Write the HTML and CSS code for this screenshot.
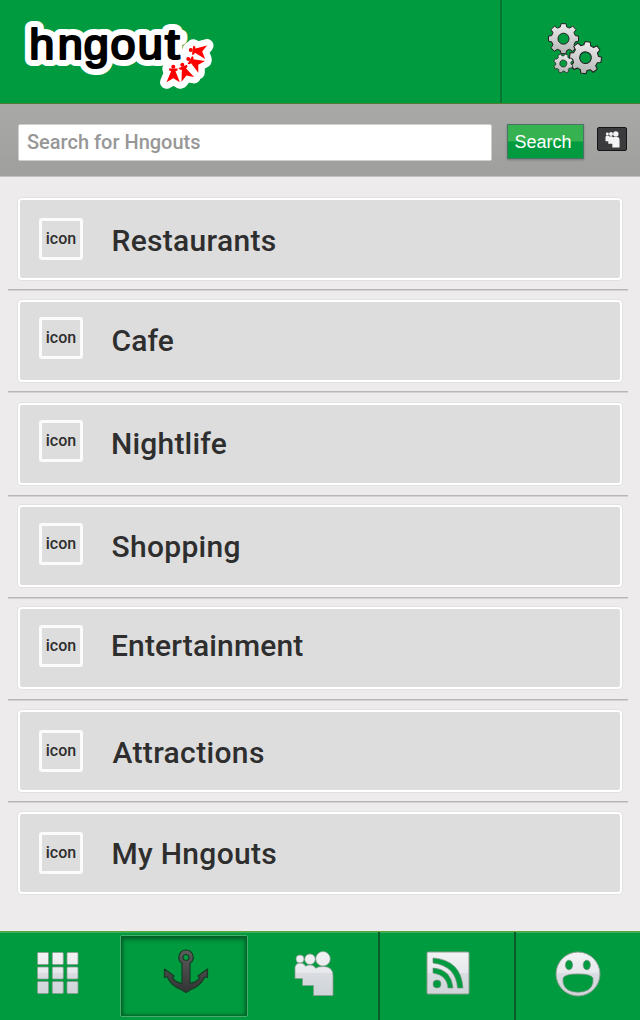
FILE: index.html
```html
<!DOCTYPE html>
<html lang="en">
<head>
<meta charset="utf-8">
<title>hngout</title>
<link rel="stylesheet" href="styles.css">
</head>
<body>
<div class="app">
  <header class="header">
    <div class="brand">
      <svg class="logo" viewBox="20 15 200 80" role="img" aria-label="hngout">
        <defs>
          <g id="figure">
            <circle r="2"/>
            <path d="M-4.500 1.800H4.500L4 3.800 2.200 4.500 6.600 15.500 0 11.500-6.800 15.500-2.200 4.500-4 3.800z"/>
          </g>
          <g id="crowd">
            <use href="#figure" transform="translate(173.300 66.800)"/>
            <use href="#figure" transform="translate(182.300 64.800) rotate(-21)"/>
            <use href="#figure" transform="translate(188.300 59) rotate(-60)"/>
            <use href="#figure" transform="translate(190.800 50) rotate(-82)"/>
          </g>
          <g id="wordmark">
            <text class="logo-text" transform="scale(1.060 1)" x="27.500 54.500 79 104.300 129.900" y="58.700">hngou</text>
            <text class="logo-text" x="165" y="58.700" textLength="14.500" lengthAdjust="spacingAndGlyphs">t</text>
          </g>
        </defs>
        <use class="logo-halo" href="#wordmark"/>
        <use class="crowd-halo" href="#crowd"/>
        <use class="logo-ink" href="#wordmark"/>
        <use class="crowd-ink" href="#crowd"/>
      </svg>
    </div>
    <button class="settings" aria-label="Settings">
      <svg viewBox="545 20 60 58" width="60" height="58">
        <defs>
          <linearGradient id="metal" x1="0" y1="0" x2="0" y2="1"><stop offset="0" stop-color="#ececec"/><stop offset="1" stop-color="#b5b5b5"/></linearGradient>
        </defs>
        <g fill="url(#metal)" stroke="#222" stroke-width="1" stroke-linejoin="round">
          <path id="gear" transform="translate(563.500 38.700)" fill-rule="evenodd" d="M-2.500-15h5l.7 3.200 3 1.200 3-2 3.300 3.500-2 3 1.300 3 3.200.6v5l-3.200.6-1.300 3 2 3-3.500 3.500-3-2-2.800 1.200-.7 3.200h-5l-.7-3.200-3-1.200-3 2-3.300-3.500 2-3-1.300-3-3.200-.6v-5l3.200-.6 1.300-3-2-3 3.500-3.500 3 2 2.800-1.200zM5.500 0a5.500 5.500 0 1 0-11 0a5.500 5.500 0 1 0 11 0z"/>
          <use href="#gear" transform="translate(585.500 57.700) rotate(8) scale(1.060) translate(-563.500 -38.700)"/>
          <use href="#gear" transform="translate(563.300 63.500) rotate(20) scale(.63) translate(-563.500 -38.700)"/>
        </g>
      </svg>
    </button>
  </header>

  <form class="search">
    <input class="search-input" type="text" placeholder="Search for Hngouts" aria-label="Search for Hngouts">
    <button class="search-button" type="button">Search</button>
    <button class="friends-button" type="button" aria-label="Friends">
      <svg viewBox="0 0 40 46" width="15" height="17"><use href="#people" fill="#f4f4f4"/></svg>
    </button>
  </form>

  <main class="list">
    <a class="card restaurants"><span class="thumb">icon</span><span class="label">Restaurants</span></a>
    <a class="card cafe"><span class="thumb">icon</span><span class="label">Cafe</span></a>
    <a class="card nightlife"><span class="thumb">icon</span><span class="label">Nightlife</span></a>
    <a class="card shopping"><span class="thumb">icon</span><span class="label">Shopping</span></a>
    <a class="card entertainment"><span class="thumb">icon</span><span class="label">Entertainment</span></a>
    <a class="card attractions"><span class="thumb">icon</span><span class="label">Attractions</span></a>
    <a class="card mine"><span class="thumb">icon</span><span class="label">My Hngouts</span></a>
  </main>

  <nav class="tabs">
    <a class="tab tab-grid" aria-label="Categories">
      <svg viewBox="0 0 44 44" width="44" height="44">
        <defs>
          <linearGradient id="silver" gradientUnits="userSpaceOnUse" x1="0" y1="0" x2="0" y2="44"><stop offset="0" stop-color="#f3f3f5"/><stop offset=".49" stop-color="#e6e8eb"/><stop offset=".51" stop-color="#d9dde1"/><stop offset="1" stop-color="#cfd4d8"/></linearGradient>
        </defs>
        <g fill="url(#silver)" stroke="#8b9c90" stroke-width=".8">
          <path d="M2.500 1.500h9q1 0 1 1v10q0 1-1 1h-9q-1 0-1-1v-10q0-1 1-1zM17.300 1.500h9q1 0 1 1v10q0 1-1 1h-9q-1 0-1-1v-10q0-1 1-1zM32 1.500h9q1 0 1 1v10q0 1-1 1h-9q-1 0-1-1v-10q0-1 1-1z"/>
          <path d="M2.500 16h9q1 0 1 1v10q0 1-1 1h-9q-1 0-1-1v-10q0-1 1-1zM17.300 16h9q1 0 1 1v10q0 1-1 1h-9q-1 0-1-1v-10q0-1 1-1zM32 16h9q1 0 1 1v10q0 1-1 1h-9q-1 0-1-1v-10q0-1 1-1z"/>
          <path d="M2.500 30.500h9q1 0 1 1v10q0 1-1 1h-9q-1 0-1-1v-10q0-1 1-1zM17.300 30.500h9q1 0 1 1v10q0 1-1 1h-9q-1 0-1-1v-10q0-1 1-1zM32 30.500h9q1 0 1 1v10q0 1-1 1h-9q-1 0-1-1v-10q0-1 1-1z"/>
        </g>
      </svg>
    </a>
    <a class="tab tab-anchor" aria-label="Hngouts">
      <svg viewBox="0 0 46 46" width="46" height="46">
        <defs><linearGradient id="iron" x1="0" y1="0" x2="0" y2="1"><stop offset="0" stop-color="#5d5d5d"/><stop offset="1" stop-color="#333"/></linearGradient></defs>
        <path fill="url(#iron)" stroke="#173d25" stroke-width="1.200" stroke-linejoin="round" fill-rule="evenodd" d="M23 1a7.300 7.300 0 0 1 4 13.300V34.500q6-1 9.800-5.500l-2-2L44.500 20v8.500l-2.500-.8Q37 37.500 28 40.500l-5 3-5-3Q9 37.500 4 27.700l-2.500.8V20l9.700 7-2 2q3.800 4.500 9.800 5.500V14.300A7.300 7.300 0 0 1 23 1zM23 5.500a3 3 0 1 0 0 6a3 3 0 1 0 0-6z"/>
      </svg>
    </a>
    <a class="tab tab-people" aria-label="Friends">
      <svg viewBox="0 0 40 46" width="40" height="46">
        <defs><g id="people"><circle cx="6" cy="8" r="4"/><circle cx="16" cy="8.200" r="5.300"/><circle cx="29" cy="7.800" r="7.300"/><path d="M1 16q1-4 5-4 4 0 5.500 3.200Q13.500 14 16 14q4 0 5.500 3.200Q24 15.500 29 15.500q10 0 10 9V44.500H19.500V34.500h-11v-7H1z"/></g></defs>
        <use href="#people" fill="url(#silver)" stroke="#8b9c90" stroke-width=".7"/>
      </svg>
    </a>
    <a class="tab tab-feed" aria-label="Feed">
      <svg viewBox="0 0 44 44" width="44" height="44">
        <rect x="1" y="1" width="42" height="42" rx="1" fill="url(#silver)" stroke="#8b9c90"/>
        <circle cx="11" cy="33" r="4" class="cut"/>
        <path class="cut" d="M7 17q18 1 20 20H22Q21 24 7 22zM7 7q28 2 30 30H31.500Q30 15 7 12z"/>
      </svg>
    </a>
    <a class="tab tab-smile" aria-label="Profile">
      <svg viewBox="0 0 46 46" width="46" height="46">
        <circle cx="23" cy="23" r="22" fill="url(#silver)" stroke="#8b9c90"/>
        <ellipse class="cut" cx="14" cy="14" rx="3.600" ry="4.800"/><ellipse class="cut" cx="31.800" cy="14" rx="3.600" ry="4.800"/>
        <path class="cut" d="M8 27q2-4 15-4t15 4q1 11-9 13.500-6 1.500-12 0Q7 38 8 27z"/>
      </svg>
    </a>
  </nav>
</div>
</body>
</html>
```
FILE: styles.css
```css
* { box-sizing: border-box; }

body {
  margin: 0;
  background: #edebec;
  font-family: Roboto, "Liberation Sans", sans-serif;
}

button { padding: 0; border: 0; background: none; }

.app {
  width: 640px;
  height: 1020px;
  display: flex;
  flex-direction: column;
  background: #edebec;
}

.header {
  height: 104px;
  display: flex;
  background: #009a3f;
  border-bottom: 1px solid #4f7b33;
}

.brand {
  width: 502px;
  padding: 15px 0 0 20px;
  border-right: 2px solid #087532;
}

.logo { display: block; width: 200px; height: 80px; stroke-linejoin: round; stroke-linecap: round; }
.logo-text { font: 42.5px "Liberation Sans", sans-serif; }
.logo-ink { fill: #000; stroke: #000; stroke-width: 2.2px; }
.logo-halo { fill: #fff; stroke: #fff; stroke-width: 14px; }
.crowd-halo { fill: #fff; stroke: #fff; stroke-width: 13px; }
.crowd-ink { fill: #f00; }

.settings {
  flex: 1;
  display: flex;
  align-items: flex-start;
  padding: 20px 0 0 43px;
}
.settings svg { display: block; }

.search {
  height: 73px;
  display: flex;
  align-items: flex-start;
  padding: 20px 13px 0 18px;
  background: linear-gradient(#a9aaa7, #9f9f9d);
  border-bottom: 1px solid #c2c1c1;
}

.search-input {
  width: 474px;
  height: 37px;
  margin-right: 15px;
  padding: 0 8px 1px;
  border: 1px solid #cfcfcf;
  border-radius: 2px;
  background: #fff;
  font: 500 20px Roboto, sans-serif;
}
.search-input::placeholder { color: #979797; opacity: 1; }

.search-button {
  width: 77px;
  height: 35px;
  padding: 1px 5px 0 0;
  border: 1px solid #4a7467;
  background: linear-gradient(#36b250 49%, #009a3f 51%);
  box-shadow: 0 1px 2px #777;
  color: #fff;
  font: 18px "Liberation Sans", sans-serif;
}

.friends-button {
  display: flex;
  justify-content: center;
  align-items: center;
  width: 30px;
  height: 24px;
  margin: 3px 0 0 13px;
  border: 1px solid #161616;
  border-radius: 2px;
  background: #3b3b3d;
}

.list {
  flex: 1;
  display: flex;
  flex-direction: column;
  padding: 21px 18px 0;
}

.card {
  position: relative;
  display: flex;
  align-items: flex-start;
  flex: none;
  height: 82px;
  margin-bottom: 20px;
  padding-left: 19px;
  border: 2px solid #fff;
  border-radius: 4px;
  background: #ddd;
  box-shadow: 0 0 0 1px #e1e1e1;
  color: #2e2e2e;
}

/* hairline between neighbouring cards */
.card:not(:last-child)::after {
  content: "";
  position: absolute;
  left: -12px;
  right: -8px;
  bottom: -13px;
  height: 2px;
  background: linear-gradient(#b7b7b7 50%, #d3d3d3 50%);
}

.thumb {
  width: 44px;
  height: 42px;
  margin-top: 18px;
  border: 3px solid #fbfbfb;
  border-radius: 3px;
  font: 500 16px/36px Roboto, sans-serif;
  text-align: center;
}

.label {
  margin: 24px 0 0 28.5px;
  font: 500 30px/34px Roboto, sans-serif;
  letter-spacing: .3px;
  white-space: nowrap;
}

.cafe { margin-bottom: 21px; }
.cafe .thumb { margin-top: 15px; }
.cafe .label { margin-top: 22px; letter-spacing: .1px; }
.nightlife .thumb { margin-top: 15px; }
.nightlife .label { margin: 22px 0 0 28px; letter-spacing: .2px; }
.shopping .thumb { margin-top: 16px; }
.shopping .label { margin-top: 23px; }
.entertainment { margin-bottom: 21px; }
.entertainment .thumb { margin-top: 16px; }
.entertainment .label { margin: 20px 0 0 28px; letter-spacing: .15px; }
.attractions .label { margin-left: 29.5px; letter-spacing: .35px; }
.mine .label { margin-top: 23px; }

.card.nightlife::after,
.card.shopping::after,
.card.entertainment::after { bottom: -14px; }

.tabs {
  height: 89px;
  display: flex;
  background: #009a3f;
  border-top: 1px solid #59a637;
  box-shadow: inset 0 1px #3fab62;
}

.tab { display: flex; justify-content: center; }
.tab svg { display: block; margin-top: 19px; }
.tab-grid { width: 120px; padding-right: 4px; }
.tab-anchor {
  width: 128px;
  height: 82px;
  margin-top: 3px;
  padding-left: 4px;
  border: 1px solid #49ac6d;
  border-radius: 2px;
  box-shadow: inset 0 2px 5px 1px #005d26, inset 0 0 3px 1px #00692b;
}
.tab-anchor svg { margin-top: 13px; }
.tab-people { width: 132px; padding-left: 2px; border-right: 2px solid #075c2a; }
.tab-feed { width: 136px; padding-left: 2px; border-right: 2px solid #075c2a; }
.tab-smile { flex: 1; }
.cut { fill: #009a3f; stroke: #75917f; stroke-width: .7px; }
```
